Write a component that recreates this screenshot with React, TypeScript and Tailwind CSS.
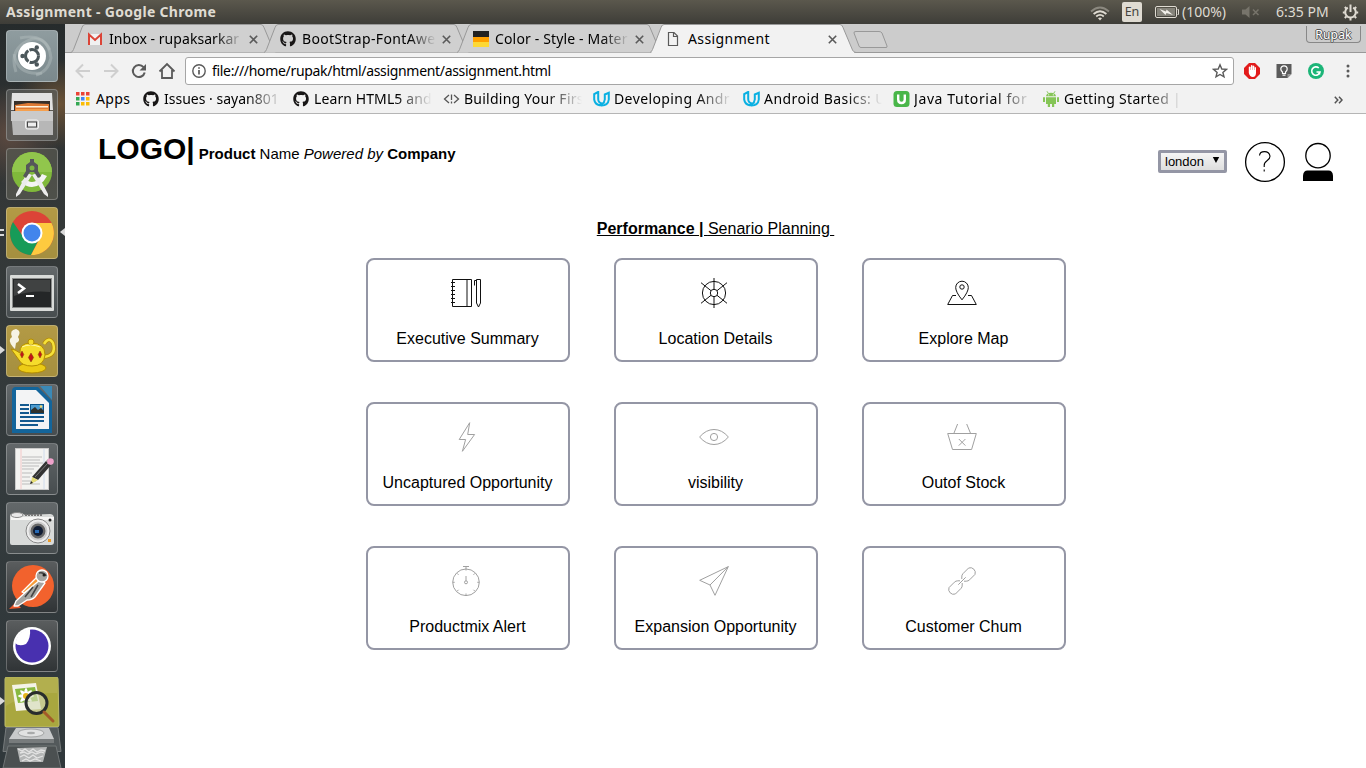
import React from "react";
import { FaGithub } from "react-icons/fa";

const ui = "font-['Noto_Sans',sans-serif]";

/* ---------- top panel ---------- */

function TopPanel() {
  return (
    <header className={`flex h-6 items-center bg-linear-to-b from-[#5b584d] to-[#3e3d38] text-[#dfdbd2] ${ui}`}>
      <div className="ml-1.5 text-[14px] leading-6 font-bold tracking-[0.3px] whitespace-nowrap">Assignment - Google Chrome</div>
      <div className="flex-1" />
      <svg width="20" height="16" viewBox="0 0 20 16" className="mr-3 mt-1" fill="none" strokeWidth="1.8">
        <path d="M1 5.5Q10-2.5 19 5.5" stroke="#8b887f" />
        <path d="M3.6 8Q10 2.4 16.4 8" stroke="#dfdbd2" />
        <path d="M6.2 10.5Q10 7.2 13.8 10.5" stroke="#dfdbd2" />
        <path d="M8 12.3Q10 10.8 12 12.3L10 14.6Z" fill="#dfdbd2" stroke="none" />
      </svg>
      <div className="mr-3 flex h-5 w-5 items-center justify-center rounded-[2px] bg-[#dfdbd2] text-[12.5px] leading-5 text-[#45433d]">En</div>
      <svg width="26" height="14" viewBox="0 0 26 14" className="mr-0.5">
        <rect x="1.500" y="1.500" width="21" height="11" rx="1.500" fill="none" stroke="#dfdbd2" />
        <rect x="3" y="3" width="18" height="8" fill="#85837a" />
        <path d="M23.500 4.500h1v5h-1" stroke="#dfdbd2" fill="none" />
        <path d="M5.500 4L12 6.500L12.500 4.500L19 10L12.500 8L11.500 10Z" fill="#f2f0ea" />
      </svg>
      <div className="w-[48px] text-[14px] leading-6 tracking-[0px] whitespace-nowrap">(100%)</div>
      <svg width="18" height="14" viewBox="0 0 18 14" className="ml-3" fill="#77746b">
        <path d="M0 4.500h3.500L7.500 1v12L3.500 9.500H0Z" />
        <path d="M11 4.500l5.500 5.500M16.500 4.500L11 10" stroke="#77746b" strokeWidth="1.500" />
      </svg>
      <div className="ml-[16px] w-[56px] text-[14px] leading-6 tracking-[0px] whitespace-nowrap">6:35 PM</div>
      <svg width="17" height="17" viewBox="0 0 17 17" className="mr-[7px] ml-2.5" fill="none" stroke="#dfdbd2">
        <path d="M5.800 3.600A5.300 5.300 0 1 0 11.200 3.600" strokeWidth="2" />
        <path d="M8.500 .5V8" strokeWidth="2" />
        <path d="M.8 8.500h2M14.200 8.500h2M2.800 3l1.500 1.500M14.200 3l-1.500 1.500M2.800 14l1.500-1.500M14.200 14l-1.500-1.500M8.500 14v2.500" strokeWidth="2" />
      </svg>
    </header>
  );
}

/* ---------- launcher ---------- */

type TileProps = { tone?: string; left?: boolean; right?: boolean; lines?: boolean; children: React.ReactNode };

function Tile({ tone = "bg-linear-to-b from-[#63686a] to-[#474d4f]", left, right, lines, children }: TileProps) {
  return (
    <div className="relative flex h-[52px] w-[65px] shrink-0 pl-1.5">
      <div className={`h-[52px] w-[52px] overflow-hidden rounded-[4px] border border-white/25 ${tone}`}>
        <svg width="52" height="52" viewBox="0 0 52 52" className="-mt-px -ml-px">{children}</svg>
      </div>
      {left && <span className="absolute top-[21px] left-0 h-0 w-0 border-y-[4px] border-l-[5px] border-y-transparent border-l-[#dadada]" />}
      {right && <span className="absolute top-[21px] right-0 h-0 w-0 border-y-[4px] border-r-[5px] border-y-transparent border-r-[#dadada]" />}
      {lines && <span className="absolute top-[22px] left-0 h-[7px] w-[4px] border-y-2 border-[#dadada]" />}
    </div>
  );
}

const olive = "bg-linear-to-b from-[#b39a45] to-[#a58f3f]";
const dark = "bg-linear-to-b from-[#5a5d5e] to-[#303436]";

function Launcher() {
  return (
    <aside className="relative flex w-[65px] shrink-0 flex-col gap-[7px] overflow-hidden bg-[radial-gradient(circle_at_10px_110px,#5d4a40_0,transparent_50px),radial-gradient(circle_at_60px_80px,#6b5236_0,transparent_45px),linear-gradient(#262b2c,#343838_25%,#333a3c_60%,#30383b)] pt-1.5">
      <Tile tone="bg-linear-to-b from-[#8f9c9f] to-[#7b898d]">
        <g fill="none" stroke="#b9c2c4" strokeOpacity=".4" strokeWidth="3">
          <path d="M10 42Q2 18 26 9Q38 7 44 20" />
          <path d="M14 8Q42 2 45 28Q42 42 30 45" />
          <path d="M8 24Q12 46 36 43" />
        </g>
        <circle cx="26" cy="26" r="14" fill="#fff" />
        <circle cx="26" cy="26" r="6.500" fill="none" stroke="#4c575b" strokeWidth="3" strokeDasharray="12.400 1.200" />
        <circle cx="16.500" cy="26" r="2.200" fill="#4c575b" />
        <circle cx="30.800" cy="17.500" r="2.200" fill="#4c575b" />
        <circle cx="30.800" cy="34.500" r="2.200" fill="#4c575b" />
      </Tile>
      <Tile tone="bg-[#5d5f5e]/70">
        <path d="M6 4h40l1 17H5Z" fill="#e2e2e2" />
        <rect x="8" y="12" width="36" height="10" fill="#38302a" />
        <path d="M9 16l13-2 21 1v8H9Z" fill="#e07b35" />
        <path d="M10 17h32v1.500H10z" fill="#fff3dd" />
        <path d="M10 20h32v2H10z" fill="#f5a04e" />
        <path d="M5 22h42v24H7Z" fill="#b7b7b7" />
        <path d="M5 22h42v10H5Z" fill="#cacaca" />
        <rect x="19.500" y="31" width="13" height="9" rx="2" fill="#c8c8c8" stroke="#f4f4f4" />
        <rect x="21.500" y="33" width="9" height="5" fill="#eee" stroke="#444" />
      </Tile>
      <Tile tone="bg-[#55564f]/80">
        <circle cx="26" cy="24" r="20" fill="#80b93b" />
        <path d="M6 24a20 20 0 0 1 40 0Z" fill="#91c64c" />
        <path d="M15 34q5 5 11 5 9 0 15-11l-5-2q-4 8-10 8-4 0-7-4Z" fill="#f4f4f4" />
        <path d="M21 25L10 46v3l4-3 12-19ZM31 25l11 21v3l-4-3-12-19Z" fill="#ececec" />
        <path d="M24 11h4v3l4 3v6l3 5-3 2-4-6h-4l-4 6-3-2 3-5v-6l4-3Z" fill="#55575a" />
        <circle cx="26" cy="20" r="2.500" fill="#7db544" />
      </Tile>
      <Tile tone={olive} right lines>
        <circle cx="26" cy="26" r="22" fill="#dc4437" />
        <path d="M7 15A22 22 0 0 0 25 48L34 30Q26 38 18 31Z" fill="#179b58" />
        <path d="M25 48A22 22 0 0 0 45.500 16H27L35 29Z" fill="#fdca3f" />
        <circle cx="26" cy="26" r="10.500" fill="#fff" />
        <circle cx="26" cy="26" r="8.500" fill="#4285ec" />
      </Tile>
      <Tile>
        <rect x="4" y="9" width="44" height="36" rx="1" fill="#d9dbd9" />
        <rect x="6.500" y="12.500" width="39" height="29" fill="#242627" stroke="#898b8a" />
        <path d="M8 14h36v12Q24 24 8 30Z" fill="#404242" />
        <path d="M12 18l6 4.500-6 4.500" fill="none" stroke="#fff" strokeWidth="2.500" />
        <path d="M20 30h8" stroke="#fff" strokeWidth="2" />
      </Tile>
      <Tile tone={olive} left>
        <path d="M7 22Q1 15 6 12Q3 5 10 4Q16 6 12 12Q15 16 10 18L9 24Z" fill="#f6f3e6" />
        <path d="M37 32Q51 31 47 18Q43 11 38 19" fill="none" stroke="#b68b00" strokeWidth="4" />
        <path d="M37 32Q51 31 47 18Q43 11 38 19" fill="none" stroke="#f5e13a" strokeWidth="2.500" />
        <ellipse cx="26" cy="43" rx="14" ry="5" fill="#eccb16" stroke="#b28c00" />
        <path d="M5 24l4 1 5 3Q13 18 25 18Q39 18 39 30Q38 41 26 41Q16 41 13 35Z" fill="#f5dc2c" stroke="#b58d00" />
        <circle cx="25" cy="17" r="3" fill="#f5dc2c" stroke="#b58d00" />
        <path d="M16 26l1.800 3.500L16 33l-1.800-3.500ZM25 28l2.600 4.500L25 37l-2.600-4.500ZM34 26l1.800 3.500L34 33l-1.800-3.500Z" fill="#c41616" stroke="#7e3a0d" strokeWidth=".5" />
        <path d="M16 22Q24 18 34 22" stroke="#fff7a5" fill="none" />
      </Tile>
      <Tile>
        <path d="M10 3h22L46 17v32H6V7Q6 3 10 3Z" fill="#13659b" />
        <path d="M34 2h12v14Z" fill="#3a89b6" />
        <path d="M10 6h20L43 19v26H10Z" fill="#f3f4f5" />
        <path d="M14 21h9M14 25h9M14 29h9M14 33h24M14 37h24M14 41h18" stroke="#13598f" strokeWidth="1.800" />
        <rect x="24.500" y="20.500" width="13" height="9" fill="#4d9cd0" stroke="#0c558a" />
        <path d="M25 29v-3l4-3 3 3 3-2 3 3v2Z" fill="#30312b" />
        <circle cx="35" cy="22.500" r="1.300" fill="#f3d66b" />
      </Tile>
      <Tile>
        <rect x="9.500" y="5.500" width="33" height="41" fill="#f3f3f1" stroke="#cacaca" />
        <path d="M15 6v40" stroke="#f3c8c8" /><path d="M38 6v40" stroke="#d0dced" />
        <path d="M16 14h20M16 17h18M16 20h21M16 23h17M16 26h12M16 30h10M16 34h8M16 38h14M16 41h18" stroke="#bbb" />
        <path d="M26 34L40 18l5 4-13 15Z" fill="#333" />
        <path d="M29 34L42 20" stroke="#777" />
        <path d="M26 34l6 3-7 4Z" fill="#e5dc75" /><path d="M25 38l2 2-3 1Z" fill="#222" />
        <path d="M40 18l2-2 5 4-2 2Z" fill="#999" /><circle cx="44.500" cy="18.500" r="3.300" fill="#efa2cb" />
      </Tile>
      <Tile>
        <path d="M4 14q0-3 5-2 5-3 10 1l25-1q3 0 4 3v25q0 3-3 3H6q-2 0-2-2Z" fill="#d8dad9" />
        <path d="M5 15h43v3H5Z" fill="#f6f6f5" />
        <ellipse cx="11" cy="13" rx="6" ry="2.500" fill="#e9e9e9" stroke="#888" />
        <path d="M19 13h17" stroke="#777" strokeWidth="2" strokeDasharray="2 1" />
        <circle cx="32" cy="29" r="12" fill="#ededed" stroke="#888" />
        <circle cx="32" cy="29" r="8.500" fill="#666" stroke="#ccc" strokeWidth="2" />
        <circle cx="32" cy="29" r="5" fill="#111d34" />
        <path d="M29 28h4v3h-4Z" fill="#2769b4" />
        <rect x="42" y="37" width="3" height="3" fill="#ee9d28" /><circle cx="44" cy="18" r="1.500" fill="#222" />
      </Tile>
      <Tile tone={dark}>
        <circle cx="27" cy="25" r="21" fill="#f2622d" />
        <path d="M3 48l7-7 5 6Z" fill="#ed582b" />
        <g fill="#a6a5a1" stroke="#fff" strokeWidth="1.300" strokeLinejoin="round">
          <path d="M8 45l2-5 13-12L33 18l6 4-10 14Q26 39 21 39L12 45Z" />
          <path d="M16 31L31 16l3 3-16 13Z" fill="#f69b38" />
          <circle cx="36" cy="15" r="6" />
        </g>
        <path d="M33 12q5-1 7 3M32 24l-7 12M27 26l-8 10" stroke="#444" fill="none" strokeWidth="1.500" />
        <circle cx="38" cy="14" r="1.500" fill="#222" />
      </Tile>
      <Tile tone={dark}>
        <circle cx="26" cy="26" r="19" fill="#fff" />
        <circle cx="26" cy="26" r="16.500" fill="#4830af" />
        <path d="M12 16A17 17 0 0 1 24 9Q25 18 20 24Q13 27 9 23Z" fill="#fff" />
      </Tile>
      <div className="relative -mt-0.5 h-[92px] shrink-0">
        <svg width="65" height="92" viewBox="0 0 65 92">
          <path d="M7 0h49q2 0 2 2l1 46q0 2-2 2H6q-1 0-1-2L5 2q0-2 2-2Z" fill="#a9a73f" stroke="#c1bf6e" />
          <path d="M6 1h51v15Q27 15 6 29Z" fill="#b2af4e" />
          <path d="M12 8l24-2 5 26-25 2Z" fill="#f4f3e8" />
          <path d="M15 12l20-2 3 14-20 2Z" fill="#88b941" />
          <g fill="#fff"><ellipse cx="26" cy="19" rx="2" ry="8" /><ellipse cx="26" cy="19" rx="8" ry="2" /><ellipse cx="26" cy="19" rx="2" ry="8" transform="rotate(45 26 19)" /><ellipse cx="26" cy="19" rx="2" ry="8" transform="rotate(-45 26 19)" /></g>
          <circle cx="26" cy="19" r="3" fill="#e5b61d" />
          <circle cx="36.500" cy="26" r="10.500" fill="#d6dcba" fillOpacity=".65" stroke="#292d2d" strokeWidth="3" />
          <path d="M44 35l9 9" stroke="#a35b29" strokeWidth="3" strokeLinecap="round" />
          <path d="M6 50.500h52l3 24H3Z" fill="#53595b" stroke="#767b7c" />
          <path d="M16 51h33l5 11H9Z" fill="#c8cacb" /><path d="M9 62h45v4H9Z" fill="#777b7c" />
          <ellipse cx="31" cy="56" rx="13" ry="4" fill="#e1e2e2" stroke="#a2a4a4" />
          <ellipse cx="31" cy="56" rx="4" ry="1.200" fill="#a8aaaa" />
          <path d="M8 69h48l5 22H3Z" fill="#4b5051" stroke="#717677" />
          <path d="M17 71l30-1-4 15H20Z" fill="#b4b6b6" />
          <path d="M18 72l4 2 3-2 4 3 4-3 4 3 4-2 4 1M20 76l4-1 4 2 4-2 4 2 5-2 3 1M20 80l4-2 5 3 4-3 4 3 6-2M22 84l4-2 4 2 5-2 6 2" stroke="#e4e4e4" strokeWidth="1.300" fill="none" />
        </svg>
        <span className="absolute top-[20px] left-0 h-0 w-0 border-y-[4px] border-l-[5px] border-y-transparent border-l-[#dadada]" />
      </div>
    </aside>
  );
}

/* ---------- browser ---------- */

function Gmail() {
  return (
    <svg width="16" height="16" viewBox="0 0 16 16">
      <path d="M1 3h14v11H1Z" fill="#f1f1f1" />
      <path d="M2 14V3.500L8 9l6-5.500V14" fill="none" stroke="#db4437" strokeWidth="2" />
    </svg>
  );
}

function Palette() {
  return (
    <svg width="16" height="16" viewBox="0 0 16 16">
      <path d="M0 0h16v6H0Z" fill="#212121" /><path d="M0 6h16v5H0Z" fill="#ffa000" /><path d="M0 11h16v5H0Z" fill="#fdd835" />
    </svg>
  );
}

function Page() {
  return (
    <svg width="16" height="16" viewBox="0 0 16 16" fill="none" stroke="#5a5a5a" strokeWidth="1.200">
      <path d="M2.500 1.500h5.500l3.500 3.500v9.500h-9ZM7.500 1.500v4h4" />
    </svg>
  );
}

type TabProps = { icon: React.ReactNode; title: string; active?: boolean; tracking: string };

function Tab({ icon, title, active, tracking }: TabProps) {
  return (
    <div className={`relative flex h-7 w-[193px] items-center pl-[15px] ${active ? "z-10" : ""}`}>
      <svg width="208" height="29" viewBox="0 0 208 29" className="absolute top-0 -left-px">
        <path d="M0 28.500Q1.500 28 2.500 25.500L11 3.500Q12 .5 14 .5H190Q192 .5 193 3.500L202.500 26Q203.500 28.500 206 28.500" fill={active ? "#f2f2f2" : "#d0d0d0"} stroke="#999" />
        {active && <path d="M2 28.500H204" stroke="#f2f2f2" strokeWidth="1.500" />}
      </svg>
      <div className="relative flex h-7 w-full items-center pt-0.5">
        {icon}
        <div className={`ml-[6px] w-[134px] text-[14px] leading-6 whitespace-nowrap text-black ${tracking} ${active ? "" : "mask-r-from-80%"}`}>{title}</div>
        <svg width="9" height="9" viewBox="0 0 9 9" className="ml-[6px]" stroke="#5a5a5a" strokeWidth="1.600"><path d="M.8 .8l7.400 7.400M8.200 .8L.8 8.200" /></svg>
      </div>
    </div>
  );
}

function TabStrip() {
  return (
    <div className="flex h-[29px] border-b border-[#999] bg-[#ccc] pl-[7px]">
      <Tab icon={<Gmail />} title="Inbox - rupaksarkar" tracking="tracking-[0.05px]" />
      <Tab icon={<FaGithub size={16} color="#181616" />} title="BootStrap-FontAwe" tracking="tracking-[0.35px]" />
      <Tab icon={<Palette />} title="Color - Style - Mater" tracking="tracking-[0.15px]" />
      <Tab icon={<Page />} title="Assignment" active tracking="tracking-[0.4px]" />
      <svg width="36" height="19" viewBox="0 0 36 19" className="mt-1.5 ml-[9px]">
        <path d="M3 1.500H26Q28 1.500 29 3L34 16Q34.500 17.500 33 17.500H8Q6.500 17.500 6 16L1 3Q.5 1.500 3 1.500Z" fill="#d0d0d0" stroke="#999" />
      </svg>
      <div className="flex-1" />
      <div className="mt-0.5 mr-[5px] flex h-[17px] w-[55px] items-center justify-center rounded-b-[4px] border border-t-0 border-[#888] pt-0.5 text-[12px] leading-4 tracking-[0.2px] text-white [text-shadow:1px_0_#555,-1px_0_#555,0_1px_#555,0_-1px_#555]">Rupak</div>
    </div>
  );
}

function Toolbar() {
  return (
    <div className="flex h-9 items-center bg-[#f2f2f2] pl-[10px]">
      <svg width="16" height="16" viewBox="0 0 16 16" fill="none" stroke="#cfcfcf" strokeWidth="2"><path d="M15 8H2M8 1.500L1.500 8L8 14.500" /></svg>
      <svg width="16" height="16" viewBox="0 0 16 16" className="ml-[12px]" fill="none" stroke="#cfcfcf" strokeWidth="2"><path d="M1 8h13M8 1.500L14.500 8L8 14.500" /></svg>
      <svg width="16" height="16" viewBox="0 0 16 16" className="ml-[12px]" fill="none" stroke="#5a5a5a" strokeWidth="2"><path d="M13.700 9.500A6 6 0 1 1 12.500 4.200" /><path d="M15 1v6.500H8.500Z" fill="#5a5a5a" stroke="none" /></svg>
      <svg width="18" height="18" viewBox="0 0 18 18" className="ml-[11px]" fill="none" stroke="#5a5a5a" strokeWidth="1.800"><path d="M1.500 9.500L9 2L16.500 9.500M4 8v8h10V8" /></svg>
      <div className="ml-[9px] flex h-7 w-[1049px] items-center rounded-[3px] border border-[#a6a6a6] bg-white pl-1.5">
        <svg width="14" height="14" viewBox="0 0 14 14" fill="none" stroke="#5a5a5a" strokeWidth="1.400"><circle cx="7" cy="7" r="6.200" /><path d="M7 6v4.500M7 3.200v1.600" strokeWidth="1.700" /></svg>
        <div className="ml-1.5 text-[14px] leading-6 tracking-[-0.32px] whitespace-nowrap text-black">file:///home/rupak/html/assignment/assignment.html</div>
        <div className="flex-1" />
        <svg width="16" height="16" viewBox="0 0 16 16" className="mr-[5px]" fill="none" stroke="#5a5a5a" strokeWidth="1.400"><path d="M8 1.800l1.800 4.200 4.600.4-3.500 3 1.100 4.500L8 11.500l-4 2.400 1.100-4.500-3.500-3 4.600-.4Z" /></svg>
      </div>
      <svg width="16" height="16" viewBox="0 0 16 16" className="ml-[10px]"><path d="M5 0h6l5 5v6l-5 5H5l-5-5V5Z" fill="#e21b1b" /><path d="M4.800 6.500V10q1 4 4 4 3 0 3.200-4V4.500q-1-.9-1.400 0V7h-.3V3Q9.300 2 8.800 3v4h-.3V2.500q-.8-1-1.600 0V7h-.3V4Q5.200 3 4.800 4Z" fill="#fff" /></svg>
      <svg width="16" height="16" viewBox="0 0 16 16" className="ml-[16px]"><path d="M.5 1h15v10l-4 4H.5Z" fill="#5b5b5b" /><path d="M11.500 15v-4h4Z" fill="#999" /><path d="M6.500 10.500V9Q4.800 7.800 4.800 6A3.200 3.200 0 0 1 11.200 6Q11.200 7.800 9.500 9v1.500ZM6.500 12.200h3" fill="none" stroke="#fff" strokeWidth="1.200" /></svg>
      <svg width="16" height="16" viewBox="0 0 16 16" className="ml-[16px]"><circle cx="8" cy="8" r="8" fill="#1cb578" /><path d="M10.800 5A4.200 4.200 0 1 0 12 9H8.500" fill="none" stroke="#fff" strokeWidth="1.600" /><path d="M12.200 9v3L10 10Z" fill="#fff" /></svg>
      <svg width="4" height="14" viewBox="0 0 4 14" className="ml-[22px]" fill="#5a5a5a"><circle cx="2" cy="2" r="1.500" /><circle cx="2" cy="7" r="1.500" /><circle cx="2" cy="12" r="1.500" /></svg>
    </div>
  );
}

function Udacity() {
  return <svg width="17" height="16" viewBox="0 0 17 16" fill="none" stroke="#0ab0e2" strokeWidth="2"><path d="M5.200 1L1.200 3v5.500Q2 13.500 6.500 14.200L9.500 12.500Q5.200 12 5.200 8ZM7.500 14.500Q15 15 15.800 8.500V1.800L11.800 3.500V8.500Q11.500 11.500 9 13" /></svg>;
}

type BookmarkProps = { icon: React.ReactNode; label: string; fade?: boolean; width?: string; tracking: string };

function Bookmark({ icon, label, fade = true, width = "w-[150px]", tracking }: BookmarkProps) {
  return (
    <div className={`flex items-center ${width}`}>
      <div className="flex w-[17px] shrink-0">{icon}</div>
      <div className={`ml-1 shrink-0 text-[14px] leading-[20px] whitespace-nowrap ${tracking} ${fade ? "w-[118px] mask-r-from-70%" : ""}`}>{label}</div>
    </div>
  );
}

function Bookmarks() {
  const cells = ["#ea4335", "#ea4335", "#ea4335", "#34a853", "#4285f4", "#fbbc05", "#34a853", "#fbbc05", "#fbbc05"];
  return (
    <div className="flex h-[25px] items-start border-b border-[#b5b5b5] bg-[#f2f2f2] pl-[10px] text-black">
      <Bookmark width="w-[68px]" fade={false} label="Apps" tracking="tracking-[0.4px]" icon={
        <svg width="14" height="14" viewBox="0 0 14 14" className="ml-px">{cells.map((c, i) => <rect key={i} x={(i % 3) * 5} y={Math.floor(i / 3) * 5} width="3.500" height="3.500" fill={c} />)}</svg>
      } />
      <Bookmark icon={<FaGithub size={16} color="#181616" />} label="Issues · sayan801" tracking="tracking-[0px]" />
      <Bookmark icon={<FaGithub size={16} color="#181616" />} label="Learn HTML5 and" tracking="tracking-[0.1px]" />
      <Bookmark icon={<svg width="17" height="12" viewBox="0 0 17 12" fill="none" stroke="#555" strokeWidth="1.300"><path d="M6 2L1.500 6L6 10M11 2l4.500 4L11 10M8.500 1.500v5.500M8.500 8.500v2" /></svg>} label="Building Your Firs" tracking="tracking-[0.25px]" />
      <Bookmark icon={<Udacity />} label="Developing Andr" tracking="tracking-[0.4px]" />
      <Bookmark icon={<Udacity />} label="Android Basics: U" tracking="tracking-[0.45px]" />
      <Bookmark icon={<svg width="17" height="16" viewBox="0 0 17 16"><rect x=".5" width="16" height="16" rx="3.500" fill="#49b649" /><path d="M5.200 3.500v5q0 3.500 3.300 3.500t3.300-3.500v-5" fill="none" stroke="#fff" strokeWidth="2.400" /></svg>} label="Java Tutorial for" tracking="tracking-[0.6px]" />
      <Bookmark icon={<svg width="16" height="16" viewBox="0 0 16 16" fill="#85c556"><path d="M3 5.300Q3.500 1.800 8 1.800t5 3.500ZM3 6.200h10V13H3ZM0 6.200h2V11H0ZM14 6.200h2V11h-2ZM4.800 12H7v4H4.800ZM9 12h2.200v4H9Z" /><path d="M4 .3l1.300 2M12 .3l-1.300 2" stroke="#85c556" /><circle cx="5.700" cy="3.800" r=".6" fill="#fff" /><circle cx="10.300" cy="3.800" r=".6" fill="#fff" /></svg>} label="Getting Started |" tracking="tracking-[0.3px]" />
      <div className="flex-1" />
      <svg width="9" height="8" viewBox="0 0 9 8" className="mt-[7px] mr-[23px]" fill="none" stroke="#555" strokeWidth="1.500"><path d="M.8 .8L3.800 4L.8 7.200M5 .8L8 4L5 7.200" /></svg>
    </div>
  );
}

/* ---------- page content ---------- */

const icons = {
  notebook: <><path d="M1.500 1.500h19v27h-19Z" /><path d="M15.500 1.500v27M16.500 1.500v27" strokeOpacity=".5" /><path d="M0 4.500h4M0 8.500h4M0 12.500h4M0 16.500h4M0 20.500h4M0 24.500h4" /><path d="M25.500 1.500h4v23.500l-2 4-2-4ZM25.500 2.500h-2v5" /></>,
  helm: <><circle cx="15" cy="15" r="11.600" /><circle cx="15" cy="15" r="3.700" /><path d="M15 0v11.300M15 18.700V30M2 4.700l10 8M28 4.700l-10 8M2 25.300l10-8M28 25.300l-10-8" /></>,
  map: <><path d="M15 21.800Q8.700 14 8.700 9.500A6.300 6.300 0 0 1 21.300 9.500Q21.300 14 15 21.800Z" /><circle cx="15" cy="9" r="2.200" /><path d="M9 17.500H5.500L.7 26.500H29.300L24.500 17.500H21" /></>,
  bolt: <path d="M18.700 .7L8.200 17.500H14.600L11.400 29.300L23.600 12.500H16.700Z" />,
  eye: <><path d="M.6 15Q7 7.500 15 7.500T29.400 15Q23 22.500 15 22.500T.6 15Z" /><circle cx="15" cy="15" r="3.600" /></>,
  basket: <><path d="M.7 11.500H29.300L24.600 27.500H5.500ZM10.600 2L7 11M19.700 2L23.400 11M11.800 17l6.600 6.600M18.400 17l-6.600 6.600" /></>,
  watch: <><circle cx="15" cy="16.300" r="13.300" /><circle cx="15" cy="16.300" r="1.500" /><path d="M12 .5h6M15 .5v4M15 10v4.800M15 27.500v2M1.700 16.300h2M26.300 16.300h2M6 7.300l1.500 1.500M24 7.300l-1.500 1.500M6 25.300l1.500-1.500M24 25.300l-1.500-1.500" /></>,
  plane: <path d="M29.300 .6L.7 14.300L11 19L16 29.300ZM11 19L29.300 .6" />,
  chain: <><path d="M14.800 13V11Q14.600 9 16 7.600L21.600 2A5 5 0 0 1 28 8.400L22.600 13.800Q21.200 15.200 19.200 15.200H17" /><path d="M15.200 17V19Q15.400 21 14 22.400L8.400 28A5 5 0 0 1 2 21.600L7.400 16.200Q8.800 14.800 10.800 14.800H13M11.300 18.700L18.700 11.300" /></>,
};

const cards: { icon: keyof typeof icons; label: string; muted?: boolean }[] = [
  { icon: "notebook", label: "Executive Summary" },
  { icon: "helm", label: "Location Details" },
  { icon: "map", label: "Explore Map" },
  { icon: "bolt", label: "Uncaptured Opportunity", muted: true },
  { icon: "eye", label: "visibility", muted: true },
  { icon: "basket", label: "Outof Stock", muted: true },
  { icon: "watch", label: "Productmix Alert", muted: true },
  { icon: "plane", label: "Expansion Opportunity", muted: true },
  { icon: "chain", label: "Customer Chum", muted: true },
];

function Content() {
  return (
    <main className="flex flex-1 flex-col bg-white font-['Liberation_Sans',Arial,sans-serif] text-black">
      <div className="flex h-[89px] items-start pl-[33px]">
        <div className="mt-[18px] flex items-baseline whitespace-pre">
          <span className="text-[30px] leading-[34px] font-bold">LOGO|</span>
          <span className="ml-1 text-[15px] leading-[17px]"><b>Product</b> Name <i>Powered by</i> <b>Company</b></span>
        </div>
        <div className="flex-1" />
        <button className="mt-9 flex h-[23px] w-[69px] items-center rounded-[2px] border-[3px] border-[#9496a5] bg-linear-to-b from-[#f5f5f5] to-[#dedede] pl-1 text-[13px] leading-4">
          london
          <svg width="8" height="7" viewBox="0 0 8 7" className="mb-0.5 ml-[8px]"><path d="M.8 0h6.400L4 6Z" fill="#000" /></svg>
        </button>
        <svg width="42" height="42" viewBox="0 0 42 42" className="mt-[27px] ml-[17px]" fill="none" stroke="#000" strokeWidth="1.300">
          <circle cx="21" cy="21" r="19.400" />
          <path d="M15.500 14.500Q15.800 10.600 20.500 10.600T26 15.200Q26 17.800 23 19.800T20.200 24.500V26M20.200 28.600v2" strokeWidth="1.100" />
        </svg>
        <svg width="32" height="40" viewBox="0 0 32 40" className="mt-[28px] mr-8 ml-[16px]">
          <circle cx="16" cy="13.700" r="12.200" fill="none" stroke="#000" strokeWidth="1.300" />
          <path d="M1 39v-5.500Q1.500 28.500 5.500 28.500H26.500Q30.500 28.500 31 33.500V39Z" />
        </svg>
      </div>
      <div className="mt-[17px] text-center text-[16px] leading-[18px] whitespace-pre underline"><b>Performance | </b>Senario Planning </div>
      <div className="mt-[20px] ml-[301px] grid w-[700px] grid-cols-3 gap-x-11 gap-y-10">
        {cards.map((c) => (
          <div key={c.label} className="flex h-[104px] flex-col items-center rounded-lg border-2 border-[#9496a5] pt-[18px]">
            <svg width="30" height="30" viewBox="0 0 30 30" className="mr-1 overflow-visible" fill="none" stroke={c.muted ? "#a0a0a0" : "#111"} strokeWidth="1">{icons[c.icon]}</svg>
            <div className="mt-[22px] mr-px text-[16px] leading-[18px] whitespace-nowrap">{c.label}</div>
          </div>
        ))}
      </div>
    </main>
  );
}

export default function App() {
  return (
    <div className="flex h-[768px] w-[1366px] flex-col overflow-hidden">
      <TopPanel />
      <div className="flex min-h-0 flex-1">
        <Launcher />
        <div className="flex min-w-0 flex-1 flex-col">
          <div className={ui}>
            <TabStrip />
            <Toolbar />
            <Bookmarks />
          </div>
          <Content />
        </div>
      </div>
    </div>
  );
}
